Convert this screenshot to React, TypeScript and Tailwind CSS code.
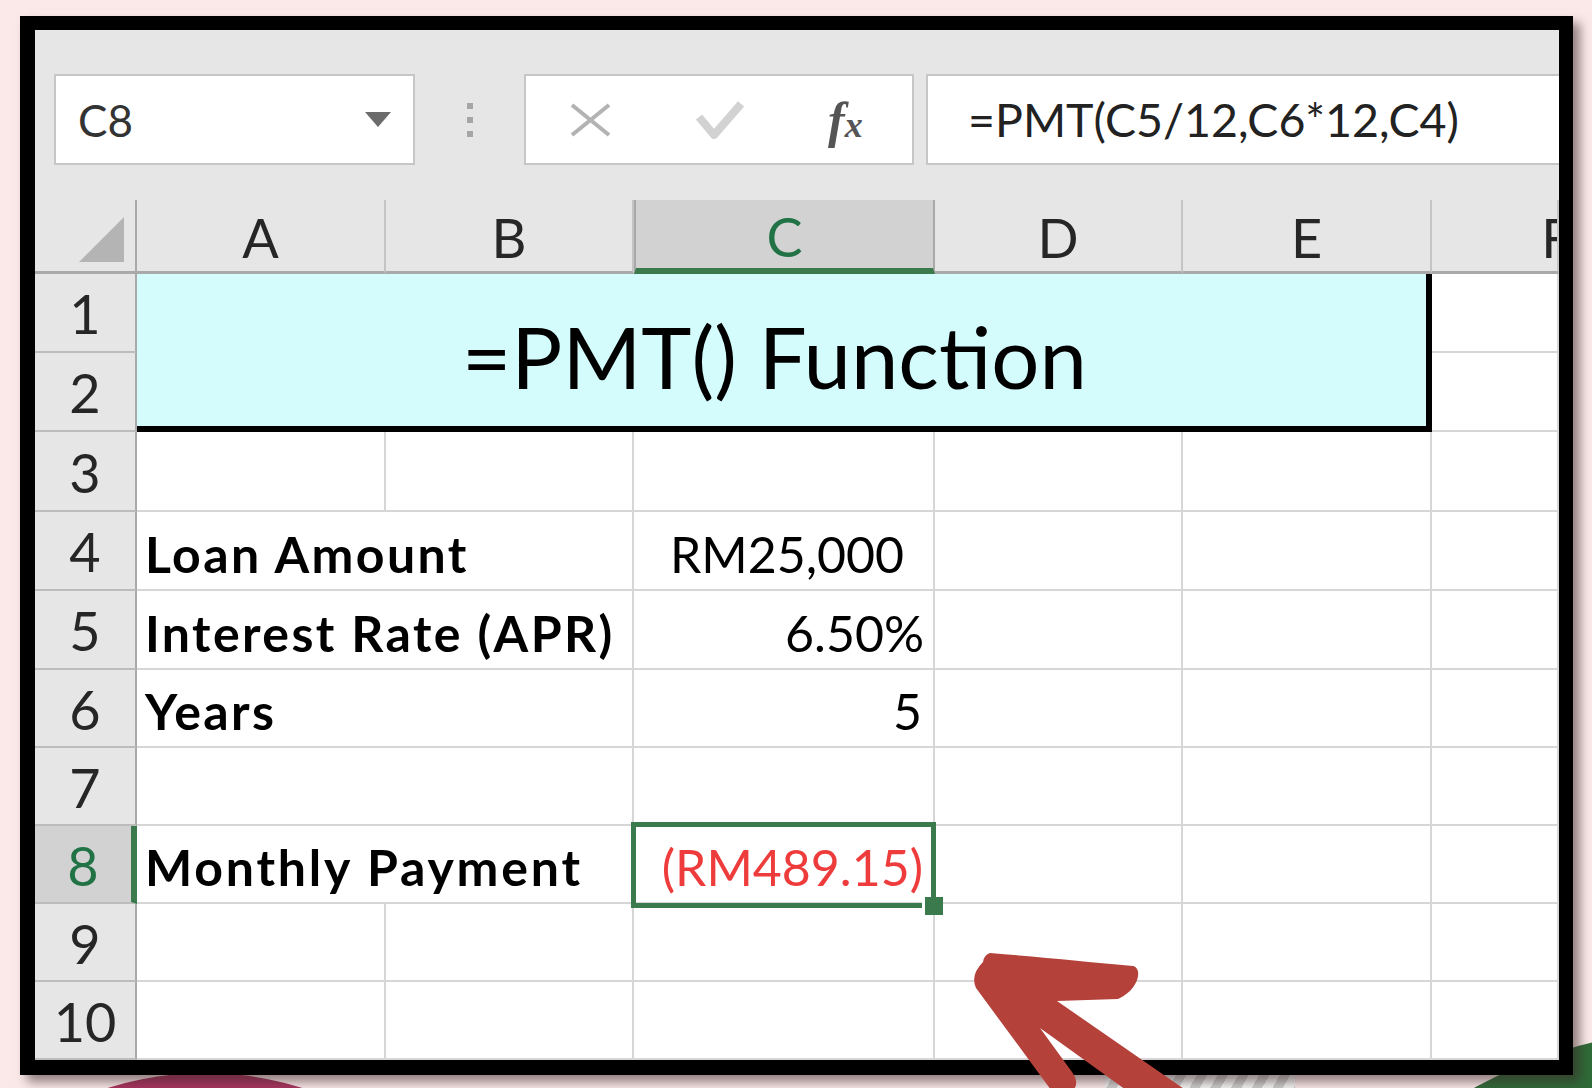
import { clsx } from 'clsx';

const columns = ['A', 'B', 'C', 'D', 'E', 'F'];

const inputs = [
    { row: '4', label: 'Loan Amount', value: 'RM25,000', pad: 'pr-[29px]' },
    { row: '5', label: 'Interest Rate (APR)', value: '6.50%', pad: 'pr-[9px]' },
    { row: '6', label: 'Years', value: '5', pad: 'pr-[11px]' },
];

const RowHead = ({ n, active = false }: { n: string; active?: boolean }) => (
    <div
        className={clsx(
            'flex items-center justify-center pt-[3px] border-b-2 border-b-[#bcbcbc] text-[54px] leading-none',
            active
                ? 'bg-[#d2d2d2] text-[#217346] border-r-[6px] border-r-[#3a7a4c]'
                : 'bg-[#e6e6e6] text-[#262626] border-r-2 border-r-[#a9a9a9]',
        )}
    >
        {n}
    </div>
);

const Cell = ({ wide = false }: { wide?: boolean }) => (
    <div className={clsx('border-r-2 border-b-2 border-[#d6d6d6]', wide && 'col-span-2')} />
);

const EmptyCells = ({ count }: { count: number }) => (
    <>
        {Array.from({ length: count }).map((_, i) => (
            <Cell key={i} />
        ))}
    </>
);

export default function App() {
    return (
        <div className="relative h-[1088px] w-[1592px] overflow-hidden bg-[#fbe9e9] pl-[20px] pt-[16px] font-['Lato',sans-serif]">
            {/* decorations peeking out under the frame */}
            <div className="absolute left-[-119px] top-[1073px] h-[648px] w-[648px] rounded-full bg-[#a8345e]" />
            <div className="absolute left-[1230px] top-[1030px] h-[940px] w-[940px] rounded-full bg-[#2f6b38]" />
            <div className="absolute left-[1105px] top-[1072px] h-[20px] w-[190px] bg-[repeating-linear-gradient(120deg,#f4f4f4_0_9px,#cdcdcd_9px_18px)]" />

            {/* excel window */}
            <div className="relative h-[1059px] w-[1553px] border-b-[15px] border-l-[15px] border-r-[14px] border-t-[14px] border-black bg-[#e6e6e6] shadow-[7px_7px_10px_rgba(60,40,40,0.55)]">
                {/* formula bar */}
                <div className="flex h-[170px] items-start pt-[44px]">
                    <div className="ml-[19px] flex h-[91px] w-[361px] items-center justify-between border-2 border-[#c6c6c6] bg-white pl-[22px] pr-[22px]">
                        <span className="text-[44px] leading-none text-[#333]">C8</span>
                        <svg width="26" height="15" viewBox="0 0 26 15">
                            <polygon points="0,0 26,0 13,15" fill="#6b6b6b" />
                        </svg>
                    </div>
                    <div className="flex h-[91px] w-[109px] flex-col items-center justify-center gap-[8px]">
                        <span className="h-[6px] w-[6px] bg-[#a6a6a6]" />
                        <span className="h-[6px] w-[6px] bg-[#a6a6a6]" />
                        <span className="h-[6px] w-[6px] bg-[#a6a6a6]" />
                    </div>
                    <div className="flex h-[91px] w-[390px] items-center border-2 border-[#c6c6c6] bg-white">
                        <svg className="ml-[44px]" width="41" height="34" viewBox="0 0 41 34">
                            <path d="M2 2 L39 32 M39 2 L2 32" stroke="#b3b3b3" strokeWidth="4" />
                        </svg>
                        <svg className="ml-[85px]" width="48" height="40" viewBox="0 0 48 40">
                            <path d="M3 17 L18 35 L45 4" stroke="#d2d2d2" strokeWidth="8" fill="none" strokeLinejoin="round" />
                        </svg>
                        <span className="ml-[84px] font-['Liberation_Serif',serif] italic leading-none text-[#555]">
                            <span className="text-[50px] font-bold">f</span>
                            <span className="text-[36px] font-bold">x</span>
                        </span>
                    </div>
                    <div className="ml-[12px] flex h-[91px] flex-1 items-center border-y-2 border-l-2 border-[#c6c6c6] bg-white pl-[40px]">
                        <span className="text-[46.5px] leading-none text-[#222]">=PMT(C5/12,C6*12,C4)</span>
                    </div>
                </div>

                {/* sheet */}
                <div className="grid grid-cols-[102px_249px_248px_301px_248px_249px_127px] grid-rows-[74px_79px_79px_80px_79px_79px_78px_78px_78px_78px_78px] bg-white">
                    {/* column headers */}
                    <div className="flex items-end justify-end border-b-[3px] border-r-2 border-b-[#a9a9a9] border-r-[#a9a9a9] bg-[#e6e6e6] pb-[9px] pr-[11px]">
                        <svg width="45" height="45" viewBox="0 0 45 45">
                            <polygon points="45,0 45,45 0,45" fill="#b4b4b4" />
                        </svg>
                    </div>
                    {columns.map((col) => (
                        <div
                            key={col}
                            className={clsx(
                                'flex items-center justify-center overflow-hidden pt-[5px] text-[54px] leading-none',
                                col === 'C'
                                    ? 'border-x-2 border-b-[6px] border-x-[#a9a9a9] border-b-[#3a7a4c] bg-[#d2d2d2] text-[#217346]'
                                    : 'border-b-[3px] border-r-2 border-b-[#a9a9a9] border-r-[#c4c4c4] bg-[#e6e6e6] text-[#262626]',
                                col === 'F' && 'justify-start',
                            )}
                        >
                            {col === 'F' ? (
                                <span className="w-[249px] shrink-0 text-center">F</span>
                            ) : (
                                col
                            )}
                        </div>
                    ))}

                    {/* rows 1-2: merged title */}
                    <RowHead n="1" />
                    <div className="col-span-5 row-span-2 flex items-center justify-center border-b-[6px] border-r-[6px] border-black bg-[#d4fcfd] pr-[14px] pt-[12px] text-[85px] leading-none text-black">
                        =PMT() Function
                    </div>
                    <Cell />
                    <RowHead n="2" />
                    <Cell />

                    <RowHead n="3" />
                    <EmptyCells count={6} />

                    {/* inputs */}
                    {inputs.map((item) => (
                        <div key={item.row} className="contents">
                            <RowHead n={item.row} />
                            <div className="col-span-2 flex items-center border-b-2 border-r-2 border-[#d6d6d6] pl-[8px] pt-[6px] text-[50px] font-bold leading-none tracking-[2.4px] text-black">
                                {item.label}
                            </div>
                            <div
                                className={clsx(
                                    'flex items-center justify-end border-b-2 border-r-2 border-[#d6d6d6] pt-[6px] text-[50px] leading-none text-black',
                                    item.pad,
                                )}
                            >
                                {item.value}
                            </div>
                            <EmptyCells count={3} />
                        </div>
                    ))}

                    <RowHead n="7" />
                    <Cell wide />
                    <EmptyCells count={4} />

                    {/* result row, C8 selected */}
                    <RowHead n="8" active />
                    <div className="col-span-2 flex items-center border-b-2 border-r-2 border-[#d6d6d6] pl-[8px] pt-[6px] text-[50px] font-bold leading-none tracking-[2.8px] text-black">
                        Monthly Payment
                    </div>
                    <div className="relative flex items-center justify-end border-b-2 border-r-2 border-[#d6d6d6] pr-[10px] pt-[6px] text-[50px] leading-none text-[#ee3b3b]">
                        (RM489.15)
                        <div className="absolute -bottom-[6px] -left-[3px] -right-[3px] -top-[4px] z-10 border-[5px] border-[#3a7a4c]" />
                        <div className="absolute left-[288px] top-[71px] z-20 h-[18px] w-[21px] border-l-[3px] border-white bg-[#3a7a4c]" />
                    </div>
                    <EmptyCells count={3} />

                    <RowHead n="9" />
                    <EmptyCells count={6} />
                    <RowHead n="10" />
                    <EmptyCells count={6} />
                </div>
            </div>

            {/* hand drawn arrow pointing at the result */}
            <svg
                className="pointer-events-none absolute left-0 top-0 z-30"
                width="1592"
                height="1088"
                viewBox="0 0 1592 1088"
            >
                <path
                    d="M990 953 C1040 957 1090 962 1133 966 C1143 968 1139 990 1118 999 L1057 1001 L1200 1100 L1140 1100 L1040 1028 L1072 1072 Q1082 1086 1068 1094 L1054 1094 L976 988 Q970 975 983 962 Q984 955 990 953 Z"
                    fill="#b4423a"
                />
            </svg>
        </div>
    );
}
